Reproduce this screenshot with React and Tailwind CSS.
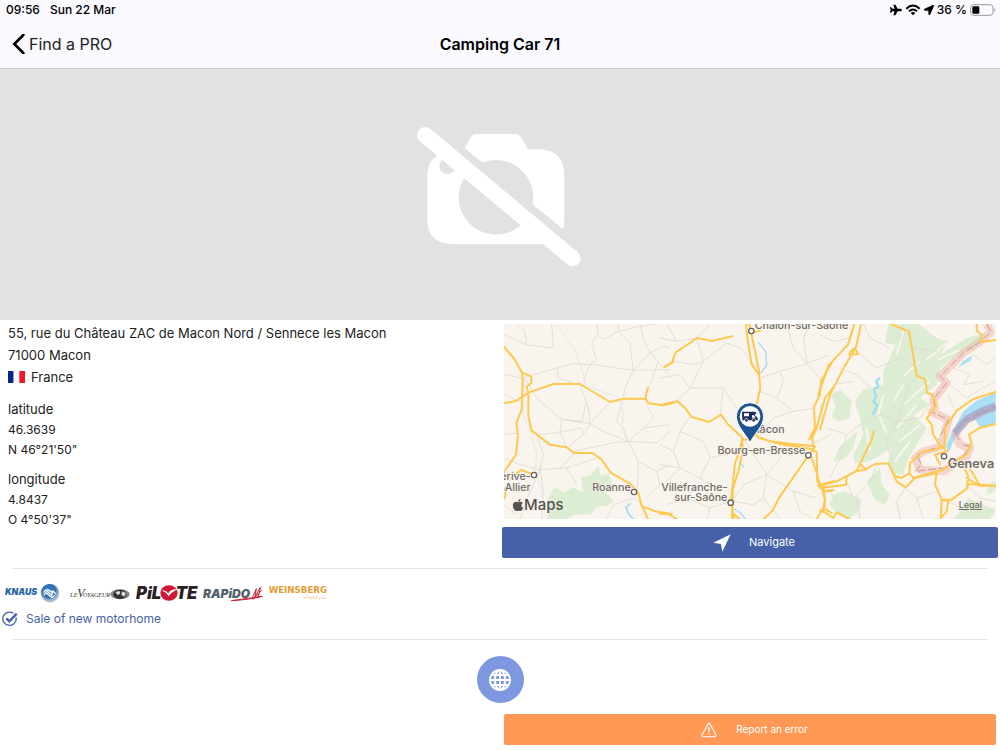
import React from 'react';
import { FaApple, FaLocationArrow, FaPlane } from 'react-icons/fa';
import { IoWarningOutline } from 'react-icons/io5';

const StatusBar = () => (
  <div className="flex items-center justify-between h-5 pl-1.5 pr-1 text-[12px] leading-5 font-medium">
    <div className="flex gap-2.5">
      <span>09:56</span>
      <span>Sun 22 Mar</span>
    </div>
    <div className="flex items-center gap-[3px]">
      <FaPlane className="w-3 h-3" />
      <svg viewBox="0 0 48 36" className="w-4 h-3" fill="none" stroke="#000" strokeWidth="6" aria-label="Wi-Fi">
        <path d="M4 14 Q24 -5 44 14" />
        <path d="M12 22 Q24 11 36 22" />
        <path d="M17 27 Q24 21 31 27 L24 34z" fill="#000" stroke="none" />
      </svg>
      <FaLocationArrow className="w-2.5 h-2.5" />
      <span>36 %</span>
      <svg viewBox="0 0 78 36" className="w-[26px] h-3" aria-label="Battery">
        <rect x="2" y="2" width="67" height="32" rx="9" fill="none" stroke="#9a9a9e" strokeWidth="3" />
        <rect x="7" y="7" width="21" height="22" rx="4" fill="#000" />
        <path d="M73 12 q6 6 0 12z" fill="#9a9a9e" />
      </svg>
    </div>
  </div>
);

const NoPhoto = () => (
  <svg viewBox="0 0 600 510" className="w-[200px] h-[170px]" aria-label="No photo">
    <path
      d="M195 113 L212 82 Q218 72 230 72 H344 Q356 72 363 82 L384 118 H418 Q493 122 493 196 V330 Q493 403 418 403 H156 Q82 398 82 330 V190 Q85 150 118 132 Z"
      fill="#fff"
    />
    <circle cx="288" cy="262" r="112" fill="#e2e2e2" />
    <circle cx="142" cy="168" r="24" fill="#e2e2e2" />
    <path d="M60 4 L600 449 V510 L60 62z" fill="#e2e2e2" />
    <path d="M75 75 L518 445" stroke="#fff" strokeWidth="48" strokeLinecap="round" />
  </svg>
);

// The three groups are neighbouring tiles of the same map
const RegionMap = () => (
  <svg viewBox="0 0 1476 585" preserveAspectRatio="xMidYMid slice" className="block w-full h-full">
    <rect width="1476" height="585" fill="#f9f4ed" />

    <g fill="#dcedd3">
      <path d="M130 585 L134 520 L150 490 L180 505 L208 490 L238 505 L230 460 L258 455 L284 425 L290 455 L310 450 L325 470 L316 490 L300 500 L328 530 L310 545 L275 550 L262 570 L215 572 L190 585z" />
      <g transform="translate(948,-18)">
        <path d="M205 18 L295 18 L350 60 L385 70 L360 110 L440 60 L495 45 L470 85 L410 110 L360 150 L350 200 L300 240 L330 260 L280 290 L320 330 L290 380 L265 420 L250 470 L222 465 L205 430 L215 390 L150 430 L105 435 L100 410 L130 350 L120 300 L105 250 L130 215 L190 200 L190 160 L210 120 L225 80 L195 75z" />
        <path d="M32 230 L60 215 L95 250 L88 300 L55 310 L35 295 L48 265z" />
        <path d="M112 340 L60 385 L40 430 L70 425 L100 390z" />
        <path d="M140 490 L180 450 L185 500 L210 530 L195 560 L165 545z" />
        <path d="M40 530 L75 520 L125 545 L115 580 L90 600 L55 590 L30 560z" />
        <path d="M425 575 L445 540 L490 560 L527 575 L510 603 L400 603z M505 500 L527 490 V520 L500 530z" />
        <path d="M0 255 L10 260 L5 310 L0 300z" />
      </g>
    </g>
    <g transform="translate(948,-18)" stroke="#f9f4ed" strokeWidth="6" fill="none">
      <path d="M300 130 L250 175 M330 190 L250 260 M290 260 L230 330 M300 320 L240 370 M270 370 L225 430 M250 40 L230 110 M380 75 L320 125 M190 230 L175 290 L200 345 M140 330 L150 400 M420 95 L355 125 M250 200 L220 250" />
    </g>

    <g fill="none" stroke="#dedad2" strokeWidth="2.5">
      <g transform="translate(-12,-18)">
        <path d="M12 50 L80 80 L75 40 L50 18 M80 80 L160 90 L155 18 M12 170 L65 180 L170 150 L220 137 L280 140 L400 157 L510 155" />
        <path d="M290 18 L295 45 L275 80 L290 125 L270 140 L250 190 M355 18 L355 40 L390 75 L400 157 L375 210 L368 250 M355 40 L420 25 L470 18 M355 40 L310 65 L290 50" />
        <path d="M400 157 L450 105 L490 85 L510 90 M450 105 L430 60 L420 18 M475 130 L450 105 M510 180 L475 130 L435 240" />
        <path d="M75 180 L110 240 L145 270 L185 303 L180 340 L200 390 M185 303 L270 318 L330 250 M172 150 L175 180 L235 200 M240 200 L265 270 L270 318 L310 340 L385 370 M250 350 L270 318" />
        <path d="M12 230 L60 250 M12 350 L55 345 M110 350 L130 410 L120 455 M185 305 L245 310 L260 250 M110 350 L165 345 L245 330 L250 350 L205 385" />
        <path d="M385 370 L370 330 L350 310 L368 250 M385 370 L415 430 L412 520 M385 370 L340 375 L220 400 M385 370 L430 330 L460 300 L440 260 M385 370 L470 375 L510 340 M430 330 L510 320" />
        <path d="M12 420 L60 440 L120 455 L200 450 L290 420 M120 455 L130 520 L125 603 M120 455 L90 520 L60 603 M200 450 L230 500 M415 430 L470 460 L510 440 M330 465 L300 510 L340 560 L320 603" />
        <path d="M470 460 L480 500 L440 540 M180 450 L210 420 L225 400 M340 560 L400 540 L425 560 M12 560 L50 590" />
      </g>
      <g transform="translate(468,-18)">
        <path d="M20 18 L50 70 L110 60 L150 18 M110 60 L130 130 L90 210 L50 250 M45 130 L100 140 L130 130 L200 75 L240 90 L290 150 M0 180 L60 170 L90 210 L190 210 L230 270" />
        <path d="M300 180 L360 160 L440 137 L510 110 M440 137 L400 90 L380 18 M440 137 L480 180 L475 230 M440 137 L430 60 L450 18 M300 220 L350 240 L400 280 L465 270 M350 240 L370 190 L360 160" />
        <path d="M90 295 L60 340 L40 400 L0 380 M60 340 L130 370 L150 420 L230 400 M40 400 L60 450 L20 490 M150 420 L120 480 L150 500 M0 440 L60 450 L120 480" />
        <path d="M255 370 L320 470 L310 540 L360 603 M320 470 L400 520 L470 540 M320 470 L250 500 L215 550 M320 470 L370 410 L390 380 M300 350 L340 300 L400 280 M455 380 L510 350" />
        <path d="M215 550 L150 570 L80 540 L20 560 M150 570 L140 603 M215 550 L280 560 L310 540 M400 520 L420 580 L460 603 M190 210 L180 290 M0 60 L50 70" />
      </g>
      <g transform="translate(948,-18)">
        <path d="M0 50 L40 70 L90 60 M120 110 L170 150 L240 120 L290 150 M130 18 L150 60 L210 90 M60 150 L110 170 L150 210 M40 200 L100 190 M250 18 L240 60 L280 90 L350 100" />
        <path d="M180 290 L230 310 L300 300 L330 260 M230 310 L200 370 L215 430 M300 170 L270 200 L230 310 M20 330 L80 350 L120 320 L180 290 M80 350 L60 420 L30 480" />
        <path d="M390 200 L440 240 L480 215 L527 190 M400 150 L450 170 L430 200 L490 190 M460 110 L500 140 L527 120 M385 230 L400 270 M170 440 L150 490 L110 530 L120 603 M80 490 L100 540" />
        <path d="M255 510 L230 550 L240 603 M255 510 L290 540 L310 603 M290 540 L350 520 M385 550 L440 580 M440 500 L480 540 L527 550 M30 520 L60 560" />
      </g>
    </g>

    <g fill="none" stroke="#e1ebe8" strokeWidth="3">
      <g transform="translate(-12,-18)">
        <path d="M165 18 L190 45 L205 70 L225 95 L235 130 L250 165 L255 195 L290 215 L360 240 L370 290 L365 335 L385 370 M12 90 L50 130 L75 190 L70 290 L95 350 L110 410 L105 460 L130 530" />
      </g>
      <path d="M1200 500 L1180 530 L1190 585" />
    </g>
    <g fill="none" stroke="#a0dcf6" strokeWidth="5" strokeLinejoin="round">
      <path d="M763 55 L785 83 L788 123 L770 148 M718 360 L712 375 M705 415 L720 430 M690 555 L705 563 L725 585" strokeWidth="4" />
      <path d="M380 538 L366 550 L374 570 L388 585" />
      <path transform="translate(948,-18)" d="M180 180 L168 190 L175 205 L162 215 L168 235 L160 250 L172 262 L165 275 L158 290" strokeWidth="7" />
    </g>

    <g transform="translate(948,-18)">
      <path d="M385 405 L378 385 L400 335 L430 280 L470 248 L527 222 V318 L480 328 L465 305 L440 310 L410 350z M415 148 L430 128 L458 112 L450 130z" fill="#abdff5" />
      <path d="M500 18 L512 42 L480 72 L430 105 L360 175 L380 195 L340 245 L345 270 L335 282 L385 305 L365 385 L310 400 L285 420 L300 455 L370 460 L400 440 L440 415 L450 390 L420 380 L405 345 L440 305 L527 265" fill="none" stroke="#f0a49b" strokeOpacity=".4" strokeWidth="24" strokeLinejoin="round" />
      <path d="M405 345 L440 305 L485 280 L527 265" fill="none" stroke="#8c95ca" strokeOpacity=".5" strokeWidth="23" />
      <path d="M500 18 L512 42 L480 72 L430 105 L360 175 L380 195 L340 245 L345 270 L335 282 L385 305 L355 365 M345 390 L290 410 L305 440 L285 460 L370 450 M410 335 L440 305 L527 265 M405 345 L420 370 M430 380 L450 385 L430 415" fill="none" stroke="#c08c86" strokeWidth="2.5" strokeDasharray="24 8" />
    </g>

    <g fill="none" stroke="#fdc94f" strokeWidth="6" strokeLinejoin="round" strokeLinecap="round">
      <g transform="translate(-12,-18)">
        <path d="M5 78 L43 123 L65 163 L68 185 L65 275 L49 315 L54 350 L48 410 L12 462 M65 163 L94 176 V194 L80 207 L85 225 V295 L95 338 L150 380 L200 388 L222 405 H277 L304 424 L332 464 L390 497 L415 525 L424 560 L444 603 M5 257 L47 249 L85 224 L160 198 H240 L330 252 L370 242 H436 L443 210 M436 242 L445 256 L488 262 L520 255 M427 565 L465 580 L515 588 M32 480 L63 456 L92 466 M12 510 L17 530 L12 542" />
        <path d="M494 147 L520 132" />
      </g>
      <g transform="translate(468,-18)">
        <path d="M13 147 L36 133 L47 103 L112 60 L156 69 L217 55" />
        <path d="M0 262 L52 250 L75 270 L95 297 L147 312 L183 290 L203 318 L248 360 L240 395 L225 435 L213 550 L222 603" />
        <path d="M258 18 L262 60 L275 140 L297 170 L301 210 L290 260 L290 350 M268 18 L280 75 L298 165 M270 45 L300 38 M290 350 L260 365 L245 365 L248 400 L235 460 L219 510 L216 603 M290 355 L330 370 L390 377 L460 384 M298 360 L360 378 L450 392 L470 402 L472 490 L485 510 L495 545 L491 570 L470 603" />
        <path d="M0 587 L25 588 L50 603 M312 603 L338 577 L360 535 L440 420 L465 385 M448 363 L465 330 L462 267 L480 230 L485 185 L515 135 M460 384 L456 360 L468 335 L495 240 L518 210 M455 420 L470 465 L480 500 L520 490 M491 520 L520 516 M491 570 L515 585 M218 585 L238 603" />
      </g>
      <g transform="translate(948,-18)">
        <path d="M103 18 L84 80 L25 143 L-5 230 M122 22 L108 88 L72 148 L30 230 L0 335 M90 103 L103 90 L115 108 L88 110z" />
        <path d="M212 18 L267 40 L290 173 L315 185 L322 225 L337 230 L348 262 L320 302 L335 320 L340 350 L365 390" />
        <path d="M470 18 V38 L485 50 V72 L527 66 M527 222 L460 243 L410 278 L375 330 L373 390 M527 318 L478 330 L447 350 L455 375 L440 410 L405 430" />
        <path d="M-5 505 L50 490 L108 460 L120 438 L155 365 L162 340 M108 460 L135 455 L165 438 L205 436 L225 475 L245 480 L268 465 L280 480 L370 455 L405 430 M120 438 L138 455 M205 436 L230 490 L257 508 L285 480 L350 465 M0 510 L78 500 L80 480 M10 500 L15 545 L10 580 L40 600 M15 520 L35 518 M0 580 L15 565 M40 600 L50 583 L88 603" />
        <path d="M268 465 L270 435 L310 400 L345 395 L365 385 L380 400 L345 410 L360 440 M350 465 L345 500 L365 545 L385 550 L380 580 L360 603 M365 545 L362 603 M365 545 L395 545 L440 512 L445 475 L435 455 M440 480 L478 503 L527 503 M440 512 L445 498 L527 503 M452 455 L478 500" />
      </g>
    </g>

    <g fill="#fff" stroke="#66615b" strokeWidth="4">
      <circle cx="90" cy="453" r="8" />
      <circle cx="390" cy="504" r="8" />
      <circle cx="742" cy="21" r="8" />
      <circle cx="913" cy="394" r="8" />
      <circle cx="680" cy="536" r="8" />
      <circle cx="1320" cy="397" r="8" />
    </g>

    <g fill="#706b66" stroke="#f9f4ed" strokeWidth="4" paintOrder="stroke" fontSize="32" fontWeight="500" className="font-['Inter',sans-serif]">
      <text x="752" y="15">Chalon-sur-Saône</text>
      <text x="842" y="328" textAnchor="end">Mâcon</text>
      <text x="904" y="390" textAnchor="end">Bourg-en-Bresse</text>
      <text x="380" y="500" textAnchor="end">Roanne</text>
      <text x="670" y="500" textAnchor="end">Villefranche-</text>
      <text x="670" y="531" textAnchor="end">sur-Saône</text>
      <text x="80" y="469" textAnchor="end">érive-</text>
      <text x="80" y="500" textAnchor="end">Allier</text>
      <text x="1331" y="432" fontSize="38" fontWeight="600">Geneva</text>
    </g>

    <g transform="translate(468,-18)">
      <path d="M270 374 C258 348 229 325 229 295 A41 41 0 0 1 311 295 C311 325 282 348 270 374z" fill="#1c5390" stroke="#fff" strokeWidth="3" />
      <circle cx="270" cy="295" r="31" fill="#fff" />
      <path d="M246 281 H284 L290 285 L284 291 L293 299 V307 H287 A6 6 0 0 0 275 307 H265 A6 6 0 0 0 253 307 H247z" fill="#1d2c58" />
      <path d="M252 286 H267 V295 H252z M276 292 H282 L287 299 H276z" fill="#fff" />
      <circle cx="259" cy="307" r="4" fill="#1d2c58" />
      <circle cx="281" cy="307" r="4" fill="#1d2c58" />
    </g>
  </svg>
);

const Knaus = () => (
  <svg viewBox="0 0 165 60" className="w-[55px] h-5" aria-label="Knaus">
    <defs>
      <radialGradient id="ball" cx="45%" cy="40%">
        <stop offset="0" stopColor="#2e83c6" />
        <stop offset=".7" stopColor="#2f6fae" />
        <stop offset="1" stopColor="#a9bccb" />
      </radialGradient>
    </defs>
    <text x="0" y="37" fontSize="26" fontWeight="900" fontStyle="italic" fill="#1f66a8" className="font-['Inter',sans-serif]">KNAUS</text>
    <path d="M24 47 H92" stroke="#c9d4dc" strokeWidth="2" strokeDasharray="5 3" />
    <circle cx="135" cy="30" r="28" fill="url(#ball)" />
    <path d="M115 29 L122 21 L140 36 L144 24 L153 33 M116 37 L123 29 L141 44 L149 37 M126 18 L142 28" fill="none" stroke="#fff" strokeWidth="4" />
  </svg>
);

const LeVoyageur = () => (
  <svg viewBox="0 0 180 60" className="w-[60px] h-5" aria-label="Le Voyageur">
    <g fill="#333" fontStyle="italic" className="font-['Liberation_Serif',serif]">
      <text x="0" y="42" fontSize="20">LE</text>
      <text x="22" y="42" fontSize="36">V</text>
      <text x="39" y="42" fontSize="18">OYAGEUR</text>
    </g>
    <ellipse cx="150" cy="34" rx="29" ry="15" fill="#888" />
    <ellipse cx="150" cy="34" rx="20" ry="14" fill="#333" />
    <path d="M136 28 L148 23 L151 31 L144 37z M156 25 L168 30 L163 41 L154 36z" fill="#ddd" />
  </svg>
);

const Pilote = () => (
  <svg viewBox="0 0 186 60" className="w-[62px] h-5" aria-label="Pilote">
    <g fill="#2b2024" fontSize="50" fontWeight="900" fontStyle="italic" className="font-['Inter',sans-serif]">
      <text x="0" y="48">PiL</text>
      <text x="119" y="48">TE</text>
    </g>
    <ellipse cx="99" cy="30" rx="26" ry="23" fill="#cf1736" />
    <path d="M76 23 Q90 20 97 31 Q105 16 126 19 Q107 26 98 40 Q92 27 76 23z" fill="#fff" />
  </svg>
);

const Rapido = () => (
  <svg viewBox="0 0 180 60" className="w-[60px] h-5" aria-label="Rapido">
    <text x="0" y="44" fontSize="36" fontWeight="900" fontStyle="italic" fill="#54606a" className="font-['Inter',sans-serif]">RAPiDO</text>
    <path d="M85 53 Q140 50 178 40 Q140 45 85 53z M149 42 L160 17 L156 42 L172 13 L165 46 M150 50 L177 20" fill="none" stroke="#c9213a" strokeWidth="3" />
  </svg>
);

const Weinsberg = () => (
  <svg viewBox="0 0 192 60" className="w-16 h-5" aria-label="Weinsberg">
    <text x="2" y="29" fontSize="26" fontWeight="700" fill="#e39b34" className="font-['DejaVu_Sans',sans-serif]">WEINSBERG</text>
    <text x="106" y="47" fontSize="13" fontStyle="italic" fill="#edc58a" className="font-['DejaVu_Sans',sans-serif]">simply you</text>
  </svg>
);

const Coordinate = ({ name, decimal, degrees }) => (
  <div>
    <dt className="text-[13px] leading-[22px]">{name}</dt>
    <dd className="text-[12px] leading-5">{decimal}</dd>
    <dd className="text-[12px] leading-5">{degrees}</dd>
  </div>
);

const App = () => {
  return (
    <div className="bg-white text-[#222] font-['Inter',sans-serif]">
      <header className="bg-[#f9f9ff] border-b border-[#cfcfd2] text-black">
        <StatusBar />
        <div className="grid grid-cols-3 items-center h-12">
          <button type="button" className="flex items-center gap-1 pl-3 text-[16px] leading-6 text-[#222]">
            <svg viewBox="0 0 39 60" className="w-[13px] h-5">
              <path d="M34 3 L7 30 L34 57" fill="none" stroke="#000" strokeWidth="8" strokeLinecap="round" />
            </svg>
            Find a PRO
          </button>
          <h1 className="text-center text-[16px] leading-6 font-semibold">Camping Car 71</h1>
        </div>
      </header>

      <div className="flex items-center justify-center h-[251px] bg-[#e2e2e2]">
        <NoPhoto />
      </div>

      <main>
        <section className="grid grid-cols-2">
          <div className="pt-0.5 pl-2 text-[13px] leading-[22px]">
            <address className="not-italic">
              <p>55, rue du Château ZAC de Macon Nord / Sennece les Macon</p>
              <p>71000 Macon</p>
              <p className="flex items-center gap-1.5">
                <svg viewBox="0 0 51 36" className="w-[17px] h-3">
                  <path d="M0 0h17v36H0z" fill="#06278c" />
                  <path d="M17 0h17v36H17z" fill="#fff" />
                  <path d="M34 0h17v36H34z" fill="#f4152f" />
                </svg>
                France
              </p>
            </address>
            <dl className="flex flex-col gap-2 mt-2.5">
              <Coordinate name="latitude" decimal="46.3639" degrees={'N 46°21\'50"'} />
              <Coordinate name="longitude" decimal="4.8437" degrees={'O 4°50\'37"'} />
            </dl>
          </div>

          <div className="flex flex-col gap-2 px-0.5 pt-1">
            <div className="relative h-[195px] mx-0.5 overflow-hidden">
              <RegionMap />
              <div className="absolute left-2 bottom-1 flex items-center text-[15px] leading-5 font-medium text-[#55524f]">
                <FaApple className="w-3 h-3.5" />
                Maps
              </div>
              <a href="#legal" className="absolute right-3.5 bottom-1.5 text-[9px] leading-4 font-medium text-[#706b66] underline">
                Legal
              </a>
            </div>
            <button type="button" className="flex items-center justify-center gap-[18px] h-[31px] pl-2 rounded-xs bg-[#4661a9] text-[11px] text-white">
              <svg viewBox="0 0 54 54" className="w-[18px] h-[18px]">
                <path d="M1 26 L53 1 L28 53 L24 30z" fill="#fff" />
              </svg>
              Navigate
            </button>
          </div>
        </section>

        <hr className="mx-3 mt-2.5 border-[#e4e4e4]" />

        <section className="pt-3.5 pb-2.5">
          <div className="flex items-center gap-2.5 pl-[5px]">
            <Knaus />
            <LeVoyageur />
            <div className="flex gap-[5px] -ml-1">
              <Pilote />
              <Rapido />
              <Weinsberg />
            </div>
          </div>
          <p className="flex items-center gap-2 pl-0.5 mt-1.5 text-[12px] leading-5 text-[#4661a9]">
            <svg viewBox="0 0 48 48" className="w-4 h-4" fill="none" stroke="#4661a9">
              <path d="M42 19 A20 20 0 1 1 34 7" strokeWidth="4" />
              <path d="M13 22 L22 31 L44 8" strokeWidth="7" />
            </svg>
            Sale of new motorhome
          </p>
        </section>

        <hr className="mx-3 border-[#e4e4e4]" />

        <div className="flex justify-center pt-4 pb-[11px]">
          <a href="#website" aria-label="Website" className="flex items-center justify-center w-[47px] h-[47px] rounded-full bg-[#7d98e0]">
            <svg viewBox="0 0 66 66" className="w-[22px] h-[22px]" fill="none" stroke="#fff" strokeWidth="6">
              <circle cx="33" cy="33" r="30" />
              <ellipse cx="33" cy="33" rx="15" ry="30" />
              <path d="M33 3 V63 M3 33 H63 M8 18 H58 M8 48 H58" />
            </svg>
          </a>
        </div>

        <div className="grid grid-cols-2">
          <button type="button" className="col-start-2 flex items-center justify-center gap-[18px] h-[31px] mx-1 pl-2 rounded-xs bg-[#ff9955] text-[10px] text-white">
            <IoWarningOutline className="w-[18px] h-[18px]" />
            Report an error
          </button>
        </div>
      </main>
    </div>
  );
};

export default App;
